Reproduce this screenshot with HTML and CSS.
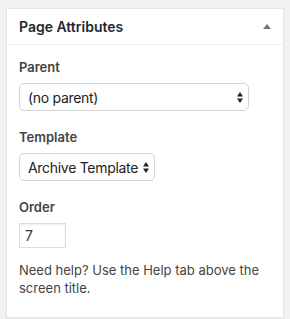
FILE: index.html
```html
<!DOCTYPE html>
<html lang="en">
<head>
    <meta charset="UTF-8">
    <title>Page Attributes</title>
    <link rel="stylesheet" href="styles.css">
</head>
<body>
    <div class="postbox">
        <div class="postbox-header">
            <h2 class="hndle">Page Attributes</h2>
            <button class="handlediv" type="button" aria-label="Toggle panel: Page Attributes">
                <svg width="8" height="5" viewBox="0 0 8 5"><path d="M4 0L8 5H0z" fill="#72777c"/></svg>
            </button>
        </div>
        <div class="inside">
            <p class="field-label first-label"><label for="parent_id">Parent</label></p>
            <div class="select-wrap select-wide">
                <select id="parent_id" class="field-select">
                    <option>(no parent)</option>
                </select>
                <svg class="select-arrows" width="6" height="11" viewBox="0 0 6 11"><path d="M3 0L6 4.5H0z M3 11L0 6.5H6z" fill="#222"/></svg>
            </div>

            <p class="field-label"><label for="page_template">Template</label></p>
            <div class="select-wrap">
                <select id="page_template" class="field-select">
                    <option>Archive Template</option>
                </select>
                <svg class="select-arrows" width="6" height="11" viewBox="0 0 6 11"><path d="M3 0L6 4.5H0z M3 11L0 6.5H6z" fill="#222"/></svg>
            </div>

            <p class="field-label"><label for="menu_order">Order</label></p>
            <input type="text" id="menu_order" class="order-input" value="7">

            <p class="help-text">Need help? Use the Help tab above the screen title.</p>
        </div>
    </div>
</body>
</html>
```

FILE: styles.css
```css
body {
    margin: 0;
    padding: 8px 6px;
    background-color: #f1f1f1;
    font-family: Inter, "Open Sans", sans-serif;
    font-size: 13px;
    color: #444;
}

.postbox {
    width: 278px;
    box-sizing: border-box;
    background-color: #fff;
    border: 1px solid #e5e5e5;
    box-shadow: 0 1px 1px rgba(0, 0, 0, 0.04);
}

.postbox-header {
    display: flex;
    align-items: center;
    justify-content: space-between;
    height: 35px;
    padding: 0 12px;
    border-bottom: 1px solid #eee;
}

.hndle {
    margin: 0;
    font-size: 14px;
    font-weight: 600;
    color: #23282d;
}

.handlediv {
    display: flex;
    padding: 0;
    border: none;
    background: none;
}

.inside {
    padding: 0 12px 20px;
}

.field-label {
    margin: 17px 0 7px;
    line-height: 18px;
    font-weight: 600;
    color: #444;
}

.first-label {
    margin-top: 13px;
}

.select-wrap {
    position: relative;
    width: 136px;
}

.select-wide {
    width: 230px;
}

.field-select {
    appearance: none;
    -webkit-appearance: none;
    width: 100%;
    height: 28px;
    padding: 0 13px 0 8px;
    border: 1px solid #d4d4d4;
    border-radius: 5px;
    background-color: #fff;
    font-family: inherit;
    font-size: 14px;
    letter-spacing: -0.3px;
    color: #222;
}

.select-arrows {
    position: absolute;
    right: 6px;
    top: 9px;
    pointer-events: none;
}

.order-input {
    display: block;
    width: 47px;
    height: 25px;
    box-sizing: border-box;
    padding: 0 5px;
    border: 1px solid #ddd;
    box-shadow: inset 0 1px 2px rgba(0, 0, 0, 0.07);
    font-family: inherit;
    font-size: 14px;
    color: #32373c;
}

.help-text {
    margin: 13px 0 0;
    line-height: 18px;
}
```
